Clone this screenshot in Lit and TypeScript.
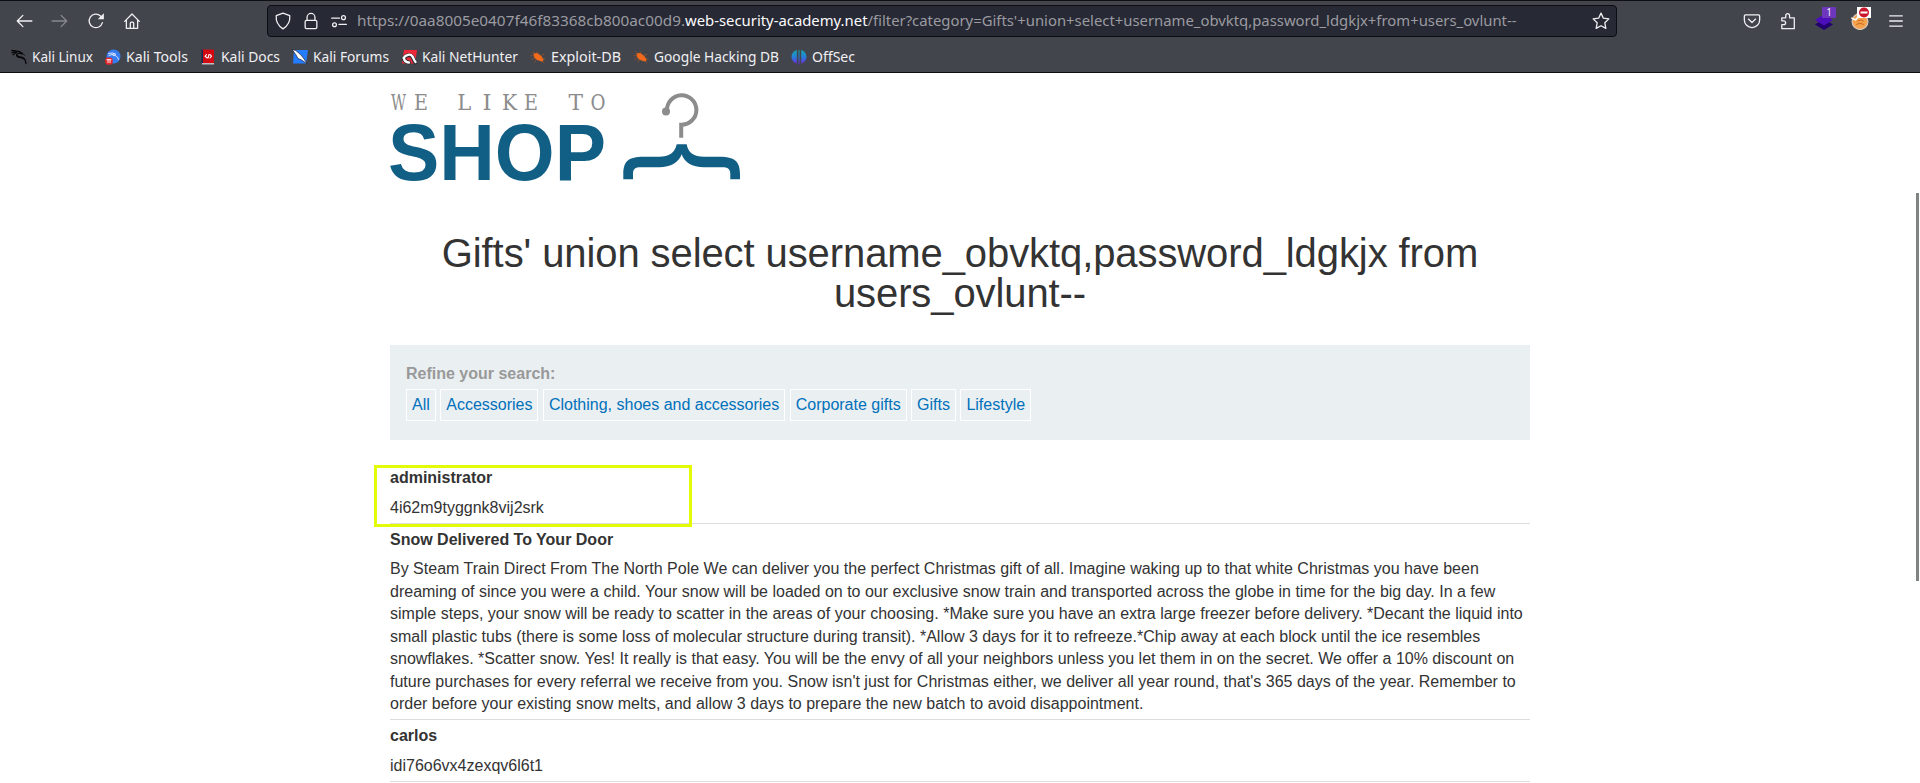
import { LitElement, html, css, svg, TemplateResult } from "lit";
import { customElement } from "lit/decorators.js";

interface Bookmark { label: string; width: number; icon: TemplateResult; }

const icon = (body: TemplateResult, size = 18) =>
  html`<svg class="icon" width=${size} height=${size} viewBox="0 0 16 16" fill="none" stroke="currentColor" stroke-width="1.15" stroke-linecap="round" stroke-linejoin="round">${body}</svg>`;

const bug = svg`<path fill="#f26a1b" stroke="none" d="M3.500 4.300 7.500 4l3.800 3 2.200 3.200-.5 2.300-2.500-.2-4.400-1.800L4 8z"/><path stroke="#a8571f" stroke-width=".6" d="m1 6.500 3 .5M3 3l2 2M7 2.500l1 2.500M11.500 6l2.500-.5M13 9.500l2 .3M4 9.500l-2 .7M6 11l-1 2M12 12l2 2"/>`;

const bookmarks: Bookmark[] = [
  { label: "Kali Linux", width: 61, icon: svg`<g stroke="#08090b"><path stroke-width="1.300" d="M.8 1.300 5 1.800q4 .2 6 2.800M1 3.500l4.500-1M2 5.800l3.500-2.600M10.800 4.600Q6.500 3.200 5.700 5.600q-.2 2.400 3 2.700 4.500.3 5.300 2.700.8 1.600 1 3.600"/><path stroke-width="1.800" d="M6 6.200q.5 1.800 3.300 2 2.700.2 4 1.800M9 3.400l2 1.200"/><path stroke-width=".8" d="m10.800 4.600 1.700.4 1 1.300"/></g>` },
  { label: "Kali Tools", width: 62, icon: svg`<circle cx="8.500" cy="7.500" r="7" fill="#367bf0" stroke="none"/><path stroke="#e8f1ff" stroke-width=".9" d="M3.500 4.500q5-1.500 7 .6M10.500 5.100Q7.300 4.500 8 6.500q4.500-.5 5.500 4M4 6.500l4-1.300"/><rect x=".2" y="8.500" width="7.500" height="7.300" rx="3" fill="#e3242b" stroke="none"/><path stroke="#fff" stroke-width=".9" d="M2 10.700h4M3 10.700v3M5 10.700v3"/>` },
  { label: "Kali Docs", width: 59, icon: svg`<path fill="#d40a12" stroke="none" d="M2 .5h12V14H2z"/><path fill="#1b2950" stroke="none" d="M1.500.5H3V14H1.500z"/><path fill="#e4dede" stroke="none" d="M2 14.200h12v1.200H2z"/><path stroke="#fff" stroke-width="1.100" d="M6.500 5.500 5 7.300l2 1.500M10 5.500l1.500 1.700L10 9M9 5.500 8 9"/>` },
  { label: "Kali Forums", width: 76, icon: svg`<path fill="#247cff" stroke="none" d="M2 1h14l-2 13.500H1z"/><path fill="#fff" stroke="#172033" stroke-width=".7" d="m.3.500 3.500 1L8.500 5.500 11 8.500l4.500 6.500-6-4-3.500-1.500-2-3.500z"/>` },
  { label: "Kali NetHunter", width: 96, icon: svg`<path fill="#ed2939" stroke="none" d="M3 1h13l-2 13.500H1z"/><path stroke="#272b34" stroke-width="4" d="M2.500 9.500c2-3.500 7-4.500 9-1.500 1.500 2.300 1 3 3 5.500M3 9.500q.500 3.500 5 4"/><path stroke="#fff" stroke-width="2.300" d="M2.500 9c2-3.500 7-4.500 9-1.500 1.500 2.300 1 3 3 5.500M3 9.500q.500 3.500 5 4"/>` },
  { label: "Exploit-DB", width: 70, icon: bug },
  { label: "Google Hacking DB", width: 125, icon: bug },
  { label: "OffSec", width: 43, icon: svg`<defs><linearGradient id="off" gradientUnits="userSpaceOnUse" x1="0" y1="1" x2="0" y2="15"><stop stop-color="#16a6ad"/><stop offset=".5" stop-color="#2580dc"/><stop offset="1" stop-color="#7027d8"/></linearGradient></defs><path fill="url(#off)" stroke="none" d="M5.800 1v13.800C2.300 13.300.5 11 .5 8s1.800-6 5.300-7zM10.200 1c3.500 1 5.300 4 5.300 7s-1.800 5.300-5.300 6.800zM7.500 1h1v14.500h-1z"/>` },
];

/** Letters of the logo's tagline: [glyph, x, width]. */
const tagline: [string, number, number][] = [
  ["W", 1, 15], ["E", 24, 14], ["L", 67.300, 14], ["I", 92.500, 9],
  ["K", 112, 15], ["E", 134, 14], ["T", 178.500, 14.500], ["O", 200.500, 15],
];

const categories = ["All", "Accessories", "Clothing, shoes and accessories", "Corporate gifts", "Gifts", "Lifestyle"];

const rows = [
  { name: "administrator", text: "4i62m9tyggnk8vij2srk" },
  { name: "Snow Delivered To Your Door", text: "By Steam Train Direct From The North Pole We can deliver you the perfect Christmas gift of all. Imagine waking up to that white Christmas you have been dreaming of since you were a child. Your snow will be loaded on to our exclusive snow train and transported across the globe in time for the big day. In a few simple steps, your snow will be ready to scatter in the areas of your choosing. *Make sure you have an extra large freezer before delivery. *Decant the liquid into small plastic tubs (there is some loss of molecular structure during transit). *Allow 3 days for it to refreeze.*Chip away at each block until the ice resembles snowflakes. *Scatter snow. Yes! It really is that easy. You will be the envy of all your neighbors unless you let them in on the secret. We offer a 10% discount on future purchases for every referral we receive from you. Snow isn't just for Christmas either, we deliver all year round, that's 365 days of the year. Remember to order before your existing snow melts, and allow 3 days to prepare the new batch to avoid disappointment." },
  { name: "carlos", text: "idi76o6vx4zexqv6l6t1" },
];

@customElement("browser-chrome")
class BrowserChrome extends LitElement {
  static styles = css`
    :host { display: block; height: 73px; box-sizing: border-box; background: #43454d; border-top: 1px solid #0e0f13; border-bottom: 1px solid #0c0d11; color: #f0f0f3; font-family: "Noto Sans", sans-serif; }
    .icon { display: block; flex: none; }
    .toolbar { display: flex; height: 40px; align-items: center; }
    .nav { display: flex; gap: 18px; width: 267px; box-sizing: border-box; padding-left: 15px; }
    .dim { opacity: .4; }
    .address { display: flex; align-items: center; width: 1350px; height: 32px; box-sizing: border-box; border: 1px solid #0c0d11; border-radius: 4px; background: #272934; margin-top: -1px; padding: 0 6px; gap: 10px; }
    .url { flex: 1; display: block; height: 24px; overflow: visible; }
    .muted { fill: #9b9ba1; }
    .host { fill: #fbfbfe; }
    .actions { display: flex; gap: 18px; padding-left: 126px; }
    .badged { position: relative; }
    .count { position: absolute; left: 7px; top: -5px; width: 14px; height: 11px; background: #6e35bd; border-radius: 1px; font-size: 10px; line-height: 11px; text-align: center; }
    .blocked { position: absolute; left: 6px; top: -5px; }
    .bookmarks { display: flex; height: 31px; align-items: center; padding-left: 11px; gap: 12px; }
    .mark { display: flex; align-items: center; gap: 5px; }
    .label { display: block; height: 22px; overflow: visible; fill: #f0f0f3; }
  `;
  render() {
    return html`
      <div class="toolbar">
        <div class="nav">
          ${icon(svg`<path d="M15 8H2M7 3 2 8l5 5"/>`)}
          <span class="dim">${icon(svg`<path d="M1 8h13M9 3l5 5-5 5"/>`)}</span>
          ${icon(svg`<path d="M13.700 9.500A6 6 0 1 1 12 3.500l1.200 1.200"/><path fill="currentColor" stroke="none" d="M15 1v5.500H9.500z"/>`)}
          ${icon(svg`<path d="m1.500 8.300 6.500-6.500 6.500 6.500M3 7v7.500h10V7M6.500 14v-4q0-1 1-1h1q1 0 1 1v4"/>`)}
        </div>
        <div class="address">
          ${icon(svg`<path d="M8 1 14 3.200c.5 5-1.700 9-6 11.800C3.700 12.200 1.500 8.200 2 3.200z"/>`)}
          ${icon(svg`<rect x="2.800" y="7.500" width="10.400" height="7.300" rx="1.200"/><path d="M4.500 7.500V4.800a3.500 3.500 0 0 1 7 0v2.700"/>`)}
          ${icon(svg`<path d="M1.500 5.500h7M8 11h6.500"/><circle cx="12" cy="5" r="1.700"/><circle cx="4" cy="11.300" r="1.700"/>`)}
          <svg class="url"><text y="17" font-size="15"><tspan class="muted" x="-1" textLength="328" lengthAdjust="spacingAndGlyphs">https://0aa8005e0407f46f83368cb800ac00d9.</tspan><tspan class="host" x="327" textLength="182.5" lengthAdjust="spacingAndGlyphs">web-security-academy.net</tspan><tspan class="muted" x="509.5" textLength="649" lengthAdjust="spacingAndGlyphs">/filter?category=Gifts'+union+select+username_obvktq,password_ldgkjx+from+users_ovlunt--</tspan></text></svg>
          ${icon(svg`<path d="m8 1 2.100 4.500 4.900.6-3.600 3.500.9 5L8 12.200l-4.300 2.400.9-5L1 6.100l4.900-.6z"/>`)}
        </div>
        <div class="actions">
          ${icon(svg`<path d="M2.200 2.500h11.600q1 0 1 1V7a6.800 6.800 0 0 1-13.600 0V3.500q0-1 1-1zM4.800 6.300 8 9.300l3.200-3"/>`)}
          ${icon(svg`<path d="M2.500 14.800v-3.600h1.700a1.700 1.700 0 1 0 0-3.400H2.500V5.200H6V3.200a1.700 1.700 0 1 1 3.400 0v2h4.200v9.600z"/>`)}
          <span class="badged">${icon(svg`<path fill="#22006f" stroke="none" d="m8 6 8 5-8 5-8-5z"/><path fill="#4c0eb9" stroke="none" d="m8 2 8 5-8 5-8-5z"/>`)}<span class="count">1</span></span>
          <span class="badged">${icon(svg`<circle cx="8" cy="8.500" r="7" fill="#f5a04b" stroke="#d9c7b6"/><path stroke="#fff" stroke-width="1.400" d="M.8 5.500 4 7l2-2"/><path stroke="#c4631c" stroke-width=".8" d="m6 8 3-1 2 1M5 11l3-1 3 1"/>`)}<svg class="blocked" width="14" height="11"><path fill="#fff" d="M0 0h14v11H0z"/><circle cx="7" cy="5.500" r="5" fill="#c9162d"/><path fill="#fff" d="M3.500 4.500h7v2h-7z"/></svg></span>
          ${icon(svg`<path stroke-linecap="butt" d="M2 3.500h12M2 8h12M2 12.500h12"/>`)}
        </div>
      </div>
      <div class="bookmarks">
        ${bookmarks.map(b => html`<span class="mark">${icon(b.icon, 16)}<svg class="label" width=${b.width}><text y="16" font-size="14" textLength=${b.width} lengthAdjust="spacingAndGlyphs">${b.label}</text></svg></span>`)}
      </div>`;
  }
}

@customElement("app-root")
class AppRoot extends LitElement {
  static styles = css`
    :host { display: block; position: relative; height: 783px; overflow: hidden; background: #fff; color: #333; font: 16px/22.4px "Liberation Sans", Arial, sans-serif; }
    .page { width: 1140px; margin: 0 auto; }
    .logo { display: block; margin-top: 17px; overflow: visible; }
    .tag { font-family: "DejaVu Serif", serif; fill: #8c8c8c; }
    .word { font-weight: 700; fill: #125f85; }
    h1 { margin: 51px 0 0; font-size: 40px; line-height: 40px; font-weight: 400; text-align: center; letter-spacing: -.09px; }
    .filters { margin-top: 32px; height: 95px; box-sizing: border-box; padding: 18px 16px 0; background: #eaeff2; }
    .refine { color: #999; font-weight: 700; }
    .chips { display: flex; gap: 4.450px; margin-top: 3.600px; }
    .chip { border: 1px solid #fff; padding: 4px 5px 3.600px; color: #0071ba; line-height: 22.4px; white-space: nowrap; }
    .results { margin-top: 22.300px; }
    .row { border-bottom: 1px solid #ddd; }
    .name { font-weight: 700; padding: 4.700px 0 3.300px; }
    .text { padding: 4px 0; }
    .marker { position: absolute; left: 374px; top: 464.500px; width: 317.500px; height: 62px; box-sizing: border-box; border: 3px solid #e3fb05; }
    .thumb { position: absolute; left: 1916px; top: 193px; width: 3px; height: 388px; background: #7f8382; }
  `;
  render() {
    return html`
      <browser-chrome></browser-chrome>
      <main class="page">
        <svg class="logo" width="352" height="92">
          <text class="tag" y="19.500" font-size="21.500">${tagline.map(([ch, x, w]) => svg`<tspan x=${x} textLength=${w} lengthAdjust="spacingAndGlyphs">${ch}</tspan>`)}</text>
          <text class="word" x="-2" y="89.600" font-size="80" textLength="218" lengthAdjust="spacingAndGlyphs">SHOP</text>
          <path fill="none" stroke="#8c8c8c" stroke-width="4" d="M277 21A14.700 14.700 0 1 1 291.200 34.700V47.700"/>
          <circle cx="276" cy="21.500" r="4" fill="#8c8c8c"/>
          <path fill="#125f85" d="M286.700 54.300H296.700C298 63 304 66.700 314 66.700H330C344 66.700 350 71 350 84V89.300H340.300V84C340.300 79 338 77.300 332 77.300H314C302 77.300 294 72 291.700 64.300C289 72 281 77.300 269 77.300H251C245 77.300 243 79 243 84V89.300H233.300V84C233.300 71 239 66.700 253 66.700H269C279 66.700 285 63 286.700 54.300Z"/>
        </svg>
        <h1>Gifts' union select username_obvktq,password_ldgkjx from users_ovlunt--</h1>
        <section class="filters">
          <div class="refine">Refine your search:</div>
          <div class="chips">${categories.map(c => html`<a class="chip">${c}</a>`)}</div>
        </section>
        <section class="results">
          ${rows.map(r => html`<div class="row"><div class="name">${r.name}</div><div class="text">${r.text}</div></div>`)}
        </section>
      </main>
      <div class="marker"></div>
      <div class="thumb"></div>`;
  }
}
